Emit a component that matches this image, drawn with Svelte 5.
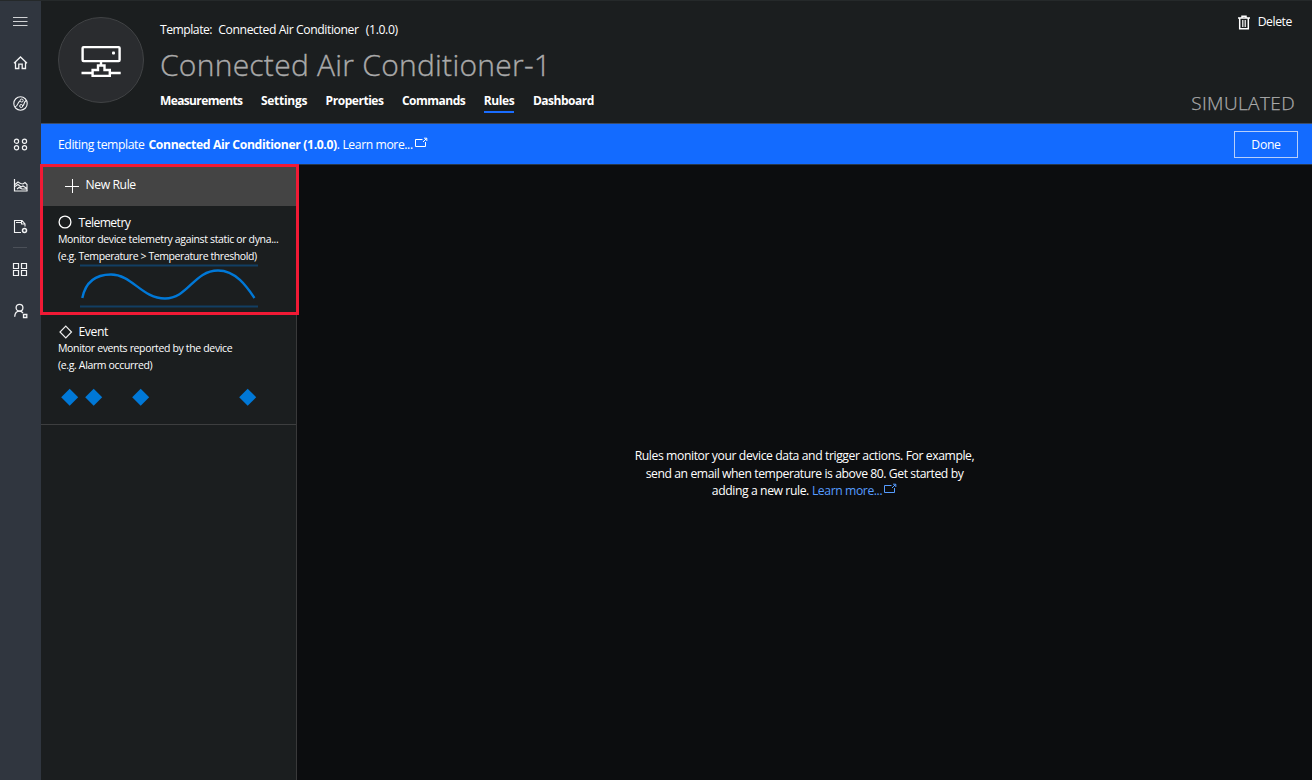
<script>
  const tabs = ['Measurements', 'Settings', 'Properties', 'Commands', 'Rules', 'Dashboard'];
  const active = 'Rules';
  const events = [70, 94, 141, 248];
</script>

{#snippet external()}
  <svg class="ext" width="13" height="11" viewBox="0 0 13 11" fill="none" stroke="currentColor">
    <path d="M7.500 2.500H.5v7h10V5M8 5l3.500-3.500M9 1.200h2.800V4" />
  </svg>
{/snippet}

<div class="app">
  <nav class="rail">
    <svg viewBox="0 0 16 16"><path d="M1 4.500h14.500M1 8.500h14.500M1 12.500h14.500" stroke="#d0d2d4" /></svg>
    <svg viewBox="0 0 16 16"><path d="M2 9.200L8.500 3l6.500 6.200M3.500 8v6.500h3.300V10.200h3.400v4.300h3.300V8" stroke-width="1.300" /></svg>
    <svg viewBox="0 0 16 16"><circle cx="8.500" cy="8.500" r="6.700" stroke-width="1.100" /><path d="M2.800 12C6.500 11.500 4.800 7.500 8.200 6M10.800 10.800C13 9.500 11 7.500 14.200 5.500" stroke-width="1.100" /><circle cx="9.700" cy="5.500" r="1.500" /><circle cx="9.200" cy="11" r="1.500" /></svg>
    <svg viewBox="0 0 16 16"><circle cx="4.500" cy="5.200" r="2.100" stroke-width="1.200" /><circle cx="12.500" cy="5.200" r="2.100" stroke-width="1.200" /><circle cx="4.500" cy="11.800" r="2.100" stroke-width="1.200" /><circle cx="12.500" cy="11.800" r="2.100" stroke-width="1.200" /></svg>
    <svg viewBox="0 0 16 16"><path d="M2.500 2v12H15.500" stroke-width="1.200" /><path d="M3 9.500l3-2 3 2.500 2-1 4 2.500v2.500M3 7.500L6 5l2.500 1.500L11 7l2-1.500 2 2V12M5 12l2-1.500 3 1.500h5" stroke-width="1.100" /></svg>
    <svg viewBox="0 0 16 16"><path d="M9 14.500H2.500V2.500h7.500l3 3.500V8.500M4 4.500h6M9.500 2.500v3.500h3.500" stroke-width="1.100" /><circle cx="12.500" cy="12.500" r="2" stroke-width="1.500" /></svg>
    <hr />
    <svg viewBox="0 0 16 16"><path d="M1.500 2.500h5v5h-5zM9.500 2.500h5v5h-5zM1.500 9.500h5v5h-5zM9.500 9.500h5v5h-5z" stroke-width="1.200" /></svg>
    <svg viewBox="0 0 16 16"><circle cx="7.500" cy="5.700" r="3.400" stroke-width="1.300" /><path d="M2.700 14.800c.2-3.300 2-5.600 4.800-5.600 1.500 0 2.500.5 3.500 1.800M11.500 12.500h3.300v3h-3.300z" stroke-width="1.300" /></svg>
  </nav>

  <div class="page">
    <header>
      <div class="avatar">
        <svg width="40" height="34" viewBox="0 0 40 34" fill="none" stroke="#fff" stroke-width="2.400">
          <rect x="1.600" y="2.100" width="37" height="14" rx="1" />
          <path d="M20 16v4.500M.5 28h11M29 28h10.700M17 25v-4.500h6.500V25h5.300v5.900H11.600V25z" />
          <rect x="31" y="6.500" width="3" height="3" rx="1" fill="#fff" stroke="none" />
        </svg>
      </div>
      <div class="heading">
        <div class="template"><span class="label">Template:</span><span>Connected Air Conditioner</span><span class="version">(1.0.0)</span></div>
        <h1>Connected Air Conditioner-1</h1>
        <div class="tabs">
          {#each tabs as tab}
            <span class="tab {tab.toLowerCase()}" class:active={tab === active}>{tab}</span>
          {/each}
        </div>
      </div>
      <div class="side">
        <div class="delete">
          <svg width="12" height="15" viewBox="0 0 12 15" fill="none" stroke="#fff"><path d="M0 3h12M4 2.500V1.200h4v1.300M1.700 3v10.800h8.600V3" stroke-width="1.500" /><path d="M4.500 5v7M6 5v7M7.500 5v7" stroke-width=".8" /></svg>
          <span>Delete</span>
        </div>
        <div class="simulated">SIMULATED</div>
      </div>
    </header>

    <div class="banner">
      <span class="edit">Editing template</span><b>Connected Air Conditioner (1.0.0)</b><span class="more">. Learn more...</span>{@render external()}
      <button>Done</button>
    </div>

    <div class="body">
      <aside>
        <div class="new">
          <svg width="14" height="14" viewBox="0 0 14 14" stroke="#fff"><path d="M0 7.500h14M7.500 0v14" /></svg>
          <span>New Rule</span>
        </div>
        <section class="telemetry">
          <div class="title"><svg width="14" height="14" viewBox="0 0 14 14" fill="none" stroke="#fff" stroke-width="1.300"><circle cx="7" cy="6" r="5.900" /></svg><span class="tel">Telemetry</span></div>
          <p class="t1">Monitor device telemetry against static or dyna...</p>
          <p class="t2">(e.g. Temperature &gt; Temperature threshold)</p>
          <svg class="chart" width="178" height="44" viewBox="80 264 178 44" fill="none">
            <path d="M80 265.500h178M80 306.500h178" stroke="#123e63" stroke-width="2" />
            <path d="M82.300 298C86 280 98 274.500 111 274.500C132 274.500 142 298.500 165 298.500C188 298.500 194 270.500 218 270.500C236 270.500 247 287 254.500 298" stroke="#0078d7" stroke-width="2.400" />
          </svg>
        </section>
        <section class="event">
          <div class="title"><svg width="14" height="14" viewBox="0 0 14 14" fill="none" stroke="#eee" stroke-width="1.200"><path d="M7.800 1.200L13.500 7l-5.700 5.800L2 7z" /></svg><span>Event</span></div>
          <p class="e1">Monitor events reported by the device</p>
          <p class="e2">(e.g. Alarm occurred)</p>
          <svg class="diamonds" width="200" height="18" viewBox="60 388 200 18">
            {#each events as x}
              <path d="M{x - 0.3} 388.800l8.500 8.500-8.500 8.500-8.500-8.500z" fill="#0078d7" />
            {/each}
          </svg>
        </section>
        <div class="highlight"></div>
      </aside>
      <main>
        <div class="m1">Rules monitor your device data and trigger actions. For example,</div>
        <div class="m2">send an email when temperature is above 80. Get started by</div>
        <div class="m3"><span>adding a new rule.</span><a href="#learn"><span>Learn more...</span>{@render external()}</a></div>
      </main>
    </div>
  </div>
</div>

<style>
  :global(body) { margin: 0; background: #0c0d0f; }
  * { box-sizing: border-box; }
  svg { overflow: visible; }
  .app { display: flex; width: 1312px; height: 780px; overflow: hidden; color: #fff; font: 12.200px/18px "Open Sans", "Noto Sans", sans-serif; letter-spacing: -.41px; white-space: nowrap; background: #0c0d0f; border-top: 1px solid #25292a; }
  .rail { width: 41px; background: #30363f; display: flex; flex-direction: column; align-items: center; padding: 12px 1px 0 0; gap: 25px; flex: none; }
  .rail svg { width: 16px; height: 16px; fill: none; stroke: #f2f3f4; stroke-width: 1; flex: none; }
  .rail hr { width: 14px; height: 1px; border: 0; background: #4b5058; margin: -12px 0 -12px; }
  .page { flex: 1; display: flex; flex-direction: column; }
  header { height: 122px; background: #1b1e1f; display: flex; padding: 0 17px; flex: none; }
  .avatar { width: 86px; height: 86px; margin-top: 16px; border-radius: 50%; background: #2a2c2f; border: 1px solid #414345; display: flex; align-items: center; justify-content: center; padding: 4px 0 0; }
  .heading { margin-left: 16px; padding-top: 20px; }
  .template { display: flex; gap: 6.300px; height: 18px; }
  .label { letter-spacing: -.5px; }
  .version { letter-spacing: -.38px; margin-left: 1px; }
  h1 { font-size: 30px; line-height: 40px; font-weight: 300; -webkit-text-stroke: .35px #aaa; color: #aaa; margin: 6px 0 6px; letter-spacing: .25px; }
  .tabs { display: flex; gap: 18.500px; font-weight: 700; height: 24px; font-size: 12px; line-height: 20px; }
  .tab { height: 23px; }
  .measurements { letter-spacing: -.63px; }
  .settings { letter-spacing: -.28px; }
  .properties { letter-spacing: -.46px; }
  .commands { letter-spacing: -.52px; }
  .rules { letter-spacing: -.35px; }
  .dashboard { letter-spacing: -.48px; }
  .active { border-bottom: 2px solid #1a6dff; height: 22px; }
  .side { margin-left: auto; display: flex; flex-direction: column; align-items: flex-end; }
  .delete { display: flex; align-items: center; gap: 8px; margin: 12px 3px 0 0; }
  .simulated { font-size: 19px; line-height: 28px; font-weight: 300; -webkit-text-stroke: .25px #aaa; color: #aaa; margin-top: 58px; letter-spacing: .4px; }
  .banner { height: 42px; background: #136bff; border-top: 1px solid #3a4c6b; border-bottom: 1px solid #26374d; display: flex; align-items: center; padding: 0 14px 0 17px; flex: none; }
  .banner span, .banner b { padding-top: 2px; }
  .banner b { margin-left: 4px; letter-spacing: -.36px; }
  .banner .ext { margin: -3px 0 0 2px; }
  button { margin-left: auto; width: 64px; height: 27px; color: #fff; background: none; border: 1px solid #b8cffa; font: inherit; letter-spacing: -.3px; padding: 2px 0 0; }
  .body { flex: 1; display: flex; }
  aside { width: 256px; background: #1b1e1f; border-right: 1px solid #39393a; position: relative; }
  .new { height: 41px; background: #444; display: flex; align-items: center; padding-left: 24px; gap: 6.500px; }
  .new span { padding-bottom: 1px; }
  section { padding: 8px 17px 0; }
  .telemetry { height: 109px; }
  .event { height: 110px; border-bottom: 1px solid #3d3e3f; }
  .title { display: flex; align-items: center; gap: 6.500px; height: 17px; }
  .tel { letter-spacing: -.58px; }
  p { margin: 0; font-size: 10.500px; line-height: 17px; letter-spacing: -.35px; }
  .t2 { letter-spacing: -.41px; }
  .chart { display: block; margin: -1px 0 0 22px; }
  .diamonds { display: block; margin: 14px 0 0 2px; }
  .highlight { position: absolute; left: -1px; top: -1px; width: 259px; height: 151px; border: 3px solid #f01a35; }
  main { flex: 1; display: flex; flex-direction: column; align-items: center; padding-top: 282px; line-height: 17.500px; }
  .m2 { letter-spacing: -.43px; }
  .m3 { display: flex; gap: 3px; }
  a { color: #569cff; text-decoration: none; display: flex; gap: 2px; }
  a .ext { margin-top: 1px; }
</style>
